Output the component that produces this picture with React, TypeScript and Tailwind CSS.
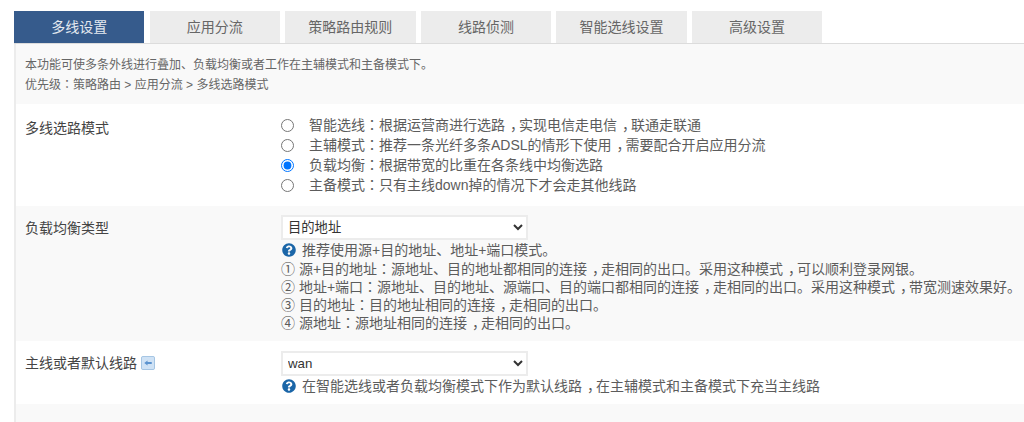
import { FaQuestionCircle } from "react-icons/fa";

const tabs = ["多线设置", "应用分流", "策略路由规则", "线路侦测", "智能选线设置", "高级设置"];
const modes = [
  "智能选线\uFF1A根据运营商进行选路\uFF0C实现电信走电信\uFF0C联通走联通",
  "主辅模式\uFF1A推荐一条光纤多条ADSL的情形下使用\uFF0C需要配合开启应用分流",
  "负载均衡\uFF1A根据带宽的比重在各条线中均衡选路",
  "主备模式\uFF1A只有主线down掉的情况下才会走其他线路",
];
const help = [
  "① 源+目的地址\uFF1A源地址、目的地址都相同的连接\uFF0C走相同的出口。采用这种模式\uFF0C可以顺利登录网银。",
  "② 地址+端口\uFF1A源地址、目的地址、源端口、目的端口都相同的连接\uFF0C走相同的出口。采用这种模式\uFF0C带宽测速效果好。",
  "③ 目的地址\uFF1A目的地址相同的连接\uFF0C走相同的出口。",
  "④ 源地址\uFF1A源地址相同的连接\uFF0C走相同的出口。",
];
const font = "font-['Liberation_Sans','Noto_Sans_CJK_SC',sans-serif]";

function T({ s }: { s: string }) {
  return (
    <>
      {s.split(/([\uFF1A\uFF0C])/).map((p, i) =>
        p === "\uFF1A" ? (
          <span key={i} className="font-['Noto_Sans_CJK_TC',sans-serif] leading-[0]">
            {p}
          </span>
        ) : p === "\uFF0C" ? (
          <span key={i} className="pl-[5px] tracking-[-5px]">
            {p}
          </span>
        ) : (
          <span key={i}>{p}</span>
        ),
      )}
    </>
  );
}

function Help({ children }: { children: string }) {
  return (
    <div className="flex h-[20px] items-center pl-[1px]">
      <FaQuestionCircle className="mr-[6px] h-[14px] w-[14px] text-[#1b66a8]" />
      <span>
        <T s={children} />
      </span>
    </div>
  );
}

function Pick({ value, options }: { value: string; options: string[] }) {
  return (
    <select
      defaultValue={value}
      className={`block h-[25px] w-[247px] border-2 border-[#ececec] bg-white pl-[1px] text-[13.3px] text-[#333] ${font}`}
    >
      {options.map((o) => (
        <option key={o}>{o}</option>
      ))}
    </select>
  );
}

export default function App() {
  return (
    <div className={`h-[422px] w-[1024px] overflow-hidden bg-white pl-[14px] pt-[11px] text-[#5c5c5c] ${font}`}>
      <div className="flex h-[33px] gap-[5.2px] border-b border-[#dcdcdc]">
        {tabs.map((t, i) => (
          <div
            key={t}
            className={`flex h-[32px] w-[130.4px] items-center justify-center text-[14px] ${
              i === 0 ? "bg-[#365b8c] text-[#e4e9f0]" : "bg-[#ececec] text-[#666]"
            }`}
          >
            {t}
          </div>
        ))}
      </div>
      <div className="border-l-2 border-[#ececec]">
        <div className="h-[60px] bg-[#f9f9f9] pl-[9px] pt-[11px] text-[12px] leading-[20px] text-[#666]">
          <div>本功能可使多条外线进行叠加、负载均衡或者工作在主辅模式和主备模式下。</div>
          <div>
            <T s={"优先级\uFF1A策略路由 > 应用分流 > 多线选路模式"} />
          </div>
        </div>
        <div className="flex h-[102px] bg-white">
          <div className="w-[265px] pl-[9px] pt-[14px] text-[14px] leading-[20px] text-[#444]">多线选路模式</div>
          <div className="pt-[11px] text-[14px] leading-[20px]">
            {modes.map((m, i) => (
              <label key={m} className="flex h-[20px] items-center">
                <input
                  type="radio"
                  name="mode"
                  defaultChecked={i === 2}
                  className="mr-[15px] h-[13px] w-[13px]"
                />
                <span>
                  <T s={m} />
                </span>
              </label>
            ))}
          </div>
        </div>
        <div className="flex h-[135px] bg-[#f9f9f9]">
          <div className="w-[265px] pl-[9px] pt-[12px] text-[14px] leading-[20px] text-[#444]">负载均衡类型</div>
          <div className="pt-[9px] text-[14px] leading-[18px]">
            <Pick value="目的地址" options={["目的地址", "源地址", "源+目的地址", "地址+端口"]} />
            <Help>推荐使用源+目的地址、地址+端口模式。</Help>
            {help.map((h) => (
              <div key={h}>
                <T s={h} />
              </div>
            ))}
          </div>
        </div>
        <div className="flex h-[63px] bg-white">
          <div className="flex w-[265px] items-start pl-[9px] pt-[12px] text-[14px] leading-[20px] text-[#444]">
            主线或者默认线路
            <svg className="ml-[4px] mt-[3px] h-[14px] w-[14px]" viewBox="0 0 15 15">
              <rect x="0.5" y="0.5" width="14" height="14" rx="1.5" fill="#cfe2f5" stroke="#9dbfe0" />
              <path d="M3.5 7.5 L7 4.8 V6.5 H11.5 V8.5 H7 V10.2 Z" fill="#5b93cf" />
            </svg>
          </div>
          <div className="pt-[10px] text-[14px]">
            <Pick value="wan" options={["wan", "wan2"]} />
            <Help>{"在智能选线或者负载均衡模式下作为默认线路\uFF0C在主辅模式和主备模式下充当主线路"}</Help>
          </div>
        </div>
        <div className="h-[18px] bg-[#f9f9f9]" />
      </div>
    </div>
  );
}
